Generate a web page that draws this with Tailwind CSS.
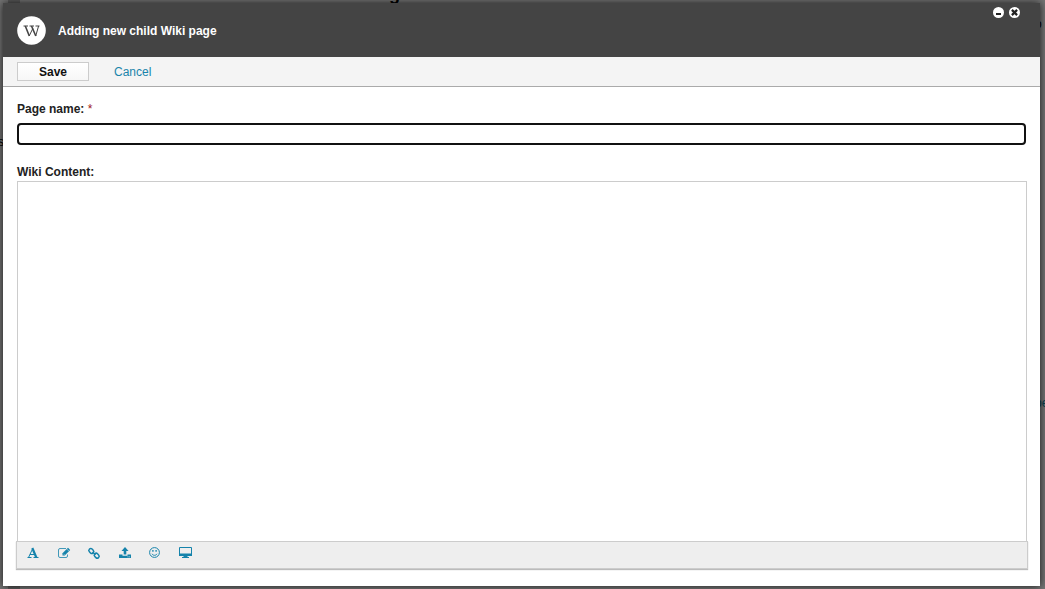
<!DOCTYPE html>
<html lang="en">
<head>
<meta charset="utf-8">
<title>Adding new child Wiki page</title>
<script src="https://cdn.jsdelivr.net/npm/@tailwindcss/browser@4"></script>
</head>
<body class="relative h-screen overflow-hidden bg-[#747474] font-['Liberation_Sans',Arial,sans-serif] text-xs text-[#111]">
<!-- Dimmed page behind the dialog -->
<div aria-hidden="true" class="absolute inset-0 overflow-hidden">
  <div class="absolute top-0 left-2 h-full w-3 bg-[#5c5c5c]"></div>
  <span class="absolute -top-4 left-[389px] text-lg leading-5 font-bold text-black">g</span>
  <span class="absolute top-[134px] -left-0.5 leading-4 text-black">s</span>
  <span class="absolute top-4 left-[1035px] text-black">o</span>
  <span class="absolute top-[395px] left-[1035px] leading-4 text-[#063f50]">pe</span>
</div>

<div role="dialog" aria-labelledby="title" class="relative flex h-full pt-[3px] pr-[5px] pb-[3px] pl-[3px]">
  <div class="flex flex-1 flex-col bg-white shadow-[0_0_8px_rgba(0,0,0,0.8)]">
    <header class="flex h-[54px] shrink-0 items-center bg-[#444] pl-3.5 pr-5 text-white">
      <svg class="size-[29px]" viewBox="0 0 29 29" aria-hidden="true">
        <circle cx="14.5" cy="14.5" r="14.3" fill="#fff"/>
        <g fill="none" stroke="#444">
          <path d="M6.500 10h4.500M12.500 10h4.500M18.500 10h4" stroke-width="1"/>
          <path d="M8.300 10l4 10M14.500 10l4.300 10" stroke-width="1.600"/>
          <path d="M12.200 20l3.600-7.500M18.700 20l2.900-10" stroke-width="1"/>
        </g>
      </svg>
      <h1 id="title" class="ml-3 pt-px font-bold">Adding new child Wiki page</h1>
      <div class="ml-auto flex gap-[5px] self-start pt-1">
        <button type="button" aria-label="Minimize" class="size-[11px]">
          <svg class="size-[11px]" viewBox="0 0 11 11"><circle cx="5.500" cy="5.500" r="5.500" fill="#fff"/><path d="M3 7h5" stroke="#222" stroke-width="2"/></svg>
        </button>
        <button type="button" aria-label="Close" class="size-[11px]">
          <svg class="size-[11px]" viewBox="0 0 11 11"><circle cx="5.500" cy="5.500" r="5.500" fill="#fff"/><path d="M2.900 2.900l5.200 5.200M8.100 2.900l-5.200 5.200" stroke="#222" stroke-width="2.200"/></svg>
        </button>
      </div>
    </header>

    <form class="flex min-h-0 flex-1 flex-col">
      <div class="flex h-[30px] shrink-0 items-center border-b border-[#aaa] bg-[#f4f4f4] pl-3.5">
        <button type="submit" class="h-[19px] w-[72px] border border-[#ccc] bg-linear-to-b from-white to-[#f7f7f7] font-bold leading-4">Save</button>
        <a href="#" class="ml-[25px] text-[#1a85ab]">Cancel</a>
      </div>

      <div class="flex min-h-0 flex-1 flex-col pt-3.5 pr-[13px] pb-[17px] pl-3.5">
        <label for="name" class="leading-4 font-bold text-[#222]">Page name: <span class="font-normal text-[#a01820]">*</span></label>
        <input id="name" type="text" required class="mt-1.5 mr-px h-[22px] rounded-[4px] border-2 border-[#111] bg-white px-1 outline-none">
        <label for="content" class="mt-[19px] leading-4 font-bold text-[#222]">Wiki Content:</label>
        <textarea id="content" class="mt-px min-h-0 flex-1 resize-none border border-b-0 border-[#ccc] bg-white p-2 outline-none"></textarea>
        <div class="-mx-px h-7 shrink-0 border border-[#ccc] bg-[#eee] pt-[3px] pl-2 text-[#1583ab] shadow-[0_1px_1px_#bbb]">
          <div role="toolbar" aria-label="Formatting" class="flex w-[169px] justify-between">
            <button type="button" aria-label="Font" class="size-4">
              <svg class="size-4" viewBox="0 0 16 16" fill="none" stroke="currentColor"><path d="M3.500 12.500L7.600 3.800M5 9.500h5" stroke-width="1"/><path d="M7.300 3l4 9.500" stroke-width="2.200"/><path d="M2.500 12.500h4M8.500 12.500h5" stroke-width="1"/></svg>
            </button>
            <button type="button" aria-label="Edit" class="size-4">
              <svg class="size-4" viewBox="0 0 16 16" fill="none" stroke="currentColor"><path d="M10 3.500H4A1.500 1.500 0 0 0 2.500 5v6A1.500 1.500 0 0 0 4 12.500h6a1.500 1.500 0 0 0 1.500-1.500V9.500" stroke-opacity=".8"/><path d="M6.500 10.500V8.300L12 2.800l2.200 2.200-5.500 5.500z" fill="currentColor" stroke="none"/><path d="M7.500 8.800l1 1M11 4.200l1.800 1.800" stroke="#eee" stroke-width=".6"/></svg>
            </button>
            <button type="button" aria-label="Link" class="size-4">
              <svg class="size-4" viewBox="0 0 16 16" fill="none" stroke="currentColor" stroke-width="1.500"><rect x="-2.600" y="-1.900" width="5.200" height="3.800" rx="1.800" transform="translate(5.300 6) rotate(45)"/><rect x="-2.600" y="-1.900" width="5.200" height="3.800" rx="1.800" transform="translate(10.700 10.700) rotate(45)"/><path d="M6.500 7l3 2.800"/></svg>
            </button>
            <button type="button" aria-label="Upload" class="size-4">
              <svg class="size-4" viewBox="0 0 16 16" fill="currentColor"><path d="M8 2l3.500 4H9.300v3.500H6.700V6H4.500zM2 9.500h3.500v1.200h5V9.500H14V13H2z"/><path d="M10.500 11.500h1v.8h-1zM12.200 11.500h.8v.8h-.8z" fill="#eee"/></svg>
            </button>
            <button type="button" aria-label="Emoticon" class="size-4">
              <svg class="size-4" viewBox="0 0 16 16" fill="none" stroke="currentColor"><circle cx="7.500" cy="7.500" r="4.900"/><path d="M5 8.800c1 2 4 2 5 0"/><path d="M5.900 5v1.800M9.100 5v1.800" stroke-width="1.300"/></svg>
            </button>
            <button type="button" aria-label="Screen" class="size-4">
              <svg class="size-4" viewBox="0 0 16 16"><path d="M1.500 2.500h12v8h-12z" fill="none" stroke="currentColor"/><path d="M1 8.500h13V11H9.500v1h1.500v1H4v-1h1.500v-1H1z" fill="currentColor"/></svg>
            </button>
          </div>
        </div>
      </div>
    </form>
  </div>
</div>
</body>
</html>
